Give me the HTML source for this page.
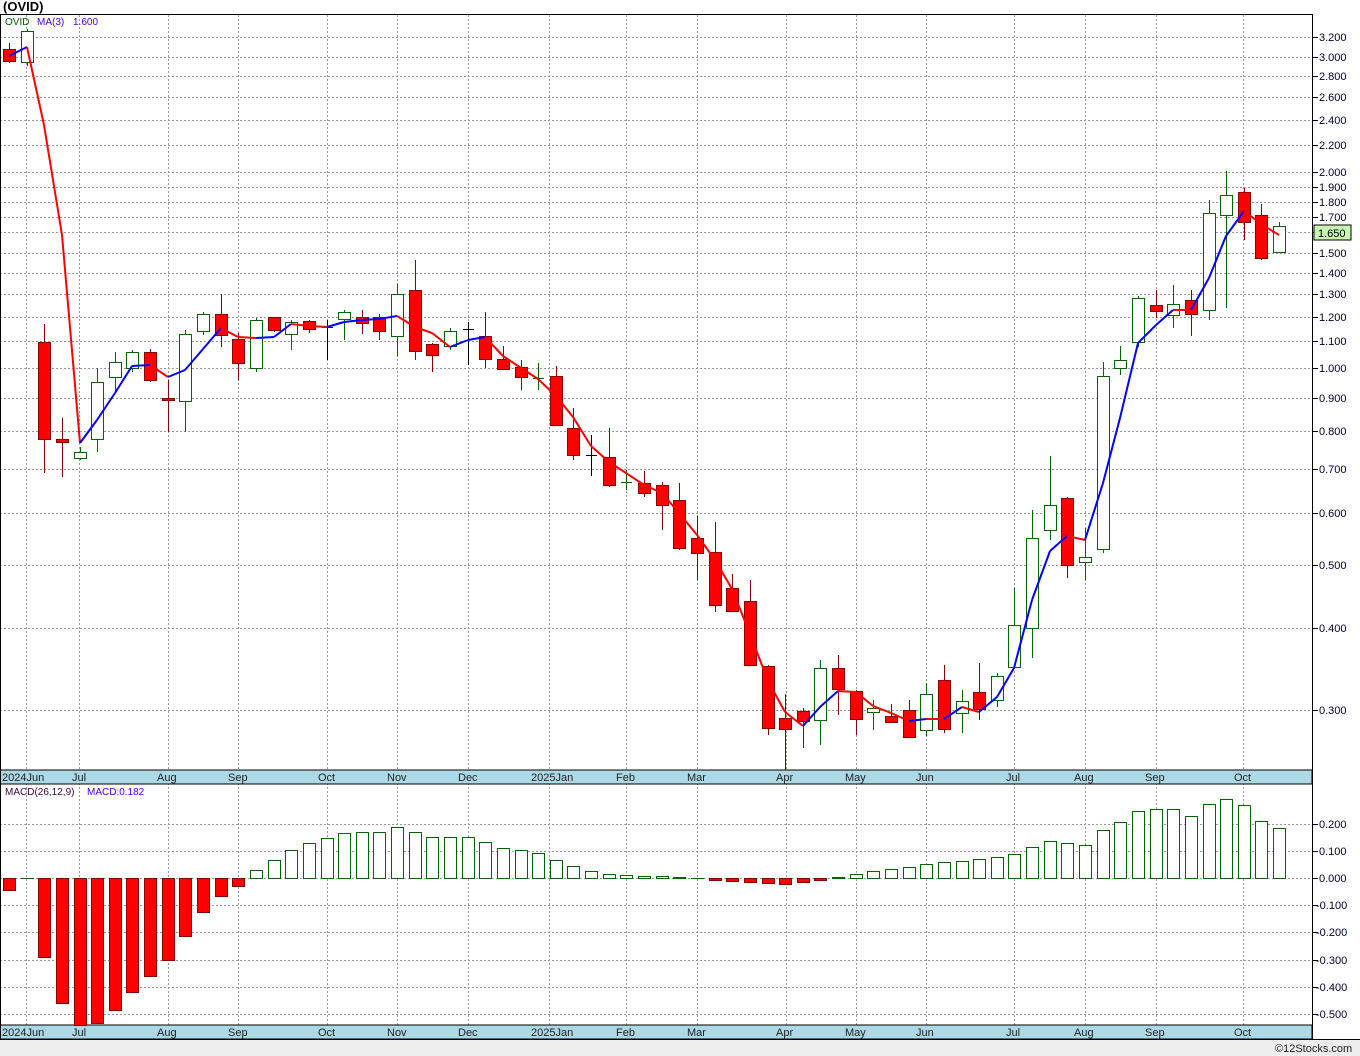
<!DOCTYPE html>
<html><head><meta charset="utf-8"><style>
html,body{margin:0;padding:0;background:#fff;width:1360px;height:1056px;overflow:hidden;font-family:"Liberation Sans",sans-serif}
svg{position:absolute;left:0;top:0}
text{font-family:"Liberation Sans",sans-serif;font-size:11px}
</style></head><body>
<svg id="s" width="1360" height="1056" xmlns="http://www.w3.org/2000/svg">
<rect x="0" y="1039" width="1360" height="17" fill="#eeeeee"/>
<g id="grid"></g>
<rect x="0" y="770" width="1312" height="14" fill="#add8e6" stroke="#000" stroke-width="1"/>
<rect x="0" y="1025" width="1312" height="14" fill="#add8e6" stroke="#000" stroke-width="1"/>
<g id="data"></g>
<line x1="0" y1="14.5" x2="1312" y2="14.5" stroke="#000"/>
<line x1="0.5" y1="14" x2="0.5" y2="1039" stroke="#000"/>
<line x1="1312.5" y1="14" x2="1312.5" y2="1039" stroke="#000"/>
<line x1="0" y1="1039.5" x2="1360" y2="1039.5" stroke="#000"/>
<text x="3" y="11" font-weight="bold" style="font-size:13px">(OVID)</text>
<text x="5" y="25" fill="#006400" style="font-size:10px">OVID</text>
<text x="37" y="25" fill="#4b00ff" style="font-size:10px">MA(3)</text>
<text x="73" y="25" fill="#4b00ff" style="font-size:10px">1.600</text>
<text x="5" y="795" fill="#400040" style="font-size:10px">MACD(26,12,9)</text>
<text x="87" y="795" fill="#4b00ff" style="font-size:10px">MACD:0.182</text>
<g fill="#222" style="font-size:11px">
<text x="2" y="781">2024Jun</text><text x="72" y="781">Jul</text><text x="157" y="781">Aug</text><text x="228" y="781">Sep</text><text x="318" y="781">Oct</text><text x="387" y="781">Nov</text><text x="458" y="781">Dec</text><text x="531" y="781">2025Jan</text><text x="616" y="781">Feb</text><text x="687" y="781">Mar</text><text x="776" y="781">Apr</text><text x="845" y="781">May</text><text x="916" y="781">Jun</text><text x="1006" y="781">Jul</text><text x="1074" y="781">Aug</text><text x="1145" y="781">Sep</text><text x="1234" y="781">Oct</text>
<text x="2" y="1036">2024Jun</text><text x="72" y="1036">Jul</text><text x="157" y="1036">Aug</text><text x="228" y="1036">Sep</text><text x="318" y="1036">Oct</text><text x="387" y="1036">Nov</text><text x="458" y="1036">Dec</text><text x="531" y="1036">2025Jan</text><text x="616" y="1036">Feb</text><text x="687" y="1036">Mar</text><text x="776" y="1036">Apr</text><text x="845" y="1036">May</text><text x="916" y="1036">Jun</text><text x="1006" y="1036">Jul</text><text x="1074" y="1036">Aug</text><text x="1145" y="1036">Sep</text><text x="1234" y="1036">Oct</text>
</g>
<g id="axis" fill="#000033" style="font-size:11px">
<text x="1319" y="41">3.200</text><text x="1319" y="61">3.000</text><text x="1319" y="80">2.800</text><text x="1319" y="101">2.600</text><text x="1319" y="124">2.400</text><text x="1319" y="149">2.200</text><text x="1319" y="176">2.000</text><text x="1319" y="191">1.900</text><text x="1319" y="206">1.800</text><text x="1319" y="221">1.700</text><text x="1319" y="257">1.500</text><text x="1319" y="277">1.400</text><text x="1319" y="298">1.300</text><text x="1319" y="321">1.200</text><text x="1319" y="345">1.100</text><text x="1319" y="372">1.000</text><text x="1319" y="402">0.900</text><text x="1319" y="435">0.800</text><text x="1319" y="473">0.700</text><text x="1319" y="517">0.600</text><text x="1319" y="569">0.500</text><text x="1319" y="632">0.400</text><text x="1319" y="714">0.300</text>
<text x="1319" y="828">0.200</text><text x="1319" y="855">0.100</text><text x="1319" y="882">0.000</text><text x="1316" y="909">-0.100</text><text x="1316" y="936">-0.200</text><text x="1316" y="964">-0.300</text><text x="1316" y="991">-0.400</text><text x="1316" y="1018">-0.500</text>
</g>
<rect x="1314" y="225" width="37" height="15" fill="#c8f7b0" stroke="#000"/>
<text x="1318" y="237" fill="#000" style="font-size:11px">1.650</text>
<text x="1275" y="1052" fill="#222" style="font-size:11px">©12Stocks.com</text>
</svg>
<script>
var NS="http://www.w3.org/2000/svg";
function el(p,t,a){var e=document.createElementNS(NS,t);for(var k in a)e.setAttribute(k,a[k]);p.appendChild(e);return e;}
var g=document.getElementById("grid"),d=document.getElementById("data");
var hy=[37,57,76,97,120,145,172,187,202,217,232,253,273,294,317,341,368,398,431,469,513,565,628,710];
hy.forEach(function(y){el(g,"line",{x1:0,x2:1312,y1:y+.5,y2:y+.5,stroke:"#999","stroke-dasharray":"2,2"});el(g,"line",{x1:1312,x2:1318,y1:y+.5,y2:y+.5,stroke:"#000"});});
[824,851,878,905,932,960,987,1014].forEach(function(y){el(g,"line",{x1:0,x2:1312,y1:y+.5,y2:y+.5,stroke:"#999","stroke-dasharray":"2,2"});el(g,"line",{x1:1312,x2:1318,y1:y+.5,y2:y+.5,stroke:"#000"});});
[26,79,168,238,327,397,468,549,626,697,786,856,926,1014,1085,1156,1243].forEach(function(x){el(g,"line",{x1:x+.5,x2:x+.5,y1:15,y2:1025,stroke:"#999","stroke-dasharray":"2,2"});});
var C=[[0,43,63,49,61],[1,29,66,31,62],[0,324,473,342,439],[0,418,477,439,442],[1,447,460,452,458],[1,368,452,382,439],[1,352,392,362,377],[1,350,372,352,368],[0,349,382,352,380],[0,380,432,398,400],[1,330,432,334,401],[1,312,335,314,331],[0,294,347,314,335],[0,333,380,339,363],[1,318,372,320,368],[0,317,332,317,330],[1,320,350,322,334],[0,320,333,321,329],[2,320,360,327,328],[1,310,340,312,319],[0,310,334,317,323],[0,314,340,317,331],[1,284,356,294,336],[0,260,360,290,351],[0,343,372,344,355],[1,328,350,331,346],[2,322,365,329,331],[0,312,368,336,359],[0,346,370,359,369],[0,360,390,367,377],[3,363,390,378,380],[0,366,425,376,425],[0,408,460,428,455],[2,435,476,455,457],[0,428,487,457,485],[3,470,490,482,484],[0,471,497,483,493],[0,482,530,485,505],[0,483,550,500,548],[0,516,580,538,553],[0,522,612,552,605],[0,574,612,588,611],[0,580,665,601,665],[0,665,735,666,728],[0,694,770,718,729],[0,708,748,711,721],[1,660,745,668,720],[0,655,715,668,689],[0,690,735,691,719],[1,700,730,708,712],[0,704,722,716,722],[0,700,738,710,737],[1,683,736,694,730],[0,665,733,680,729],[1,690,733,701,713],[0,663,720,692,709],[1,673,707,676,700],[1,588,667,625,667],[1,510,658,538,628],[1,456,540,505,530],[0,497,578,498,565],[1,528,580,557,562],[1,362,553,376,549],[1,346,375,360,368],[1,296,347,298,342],[0,290,318,305,311],[1,285,328,304,315],[0,290,336,300,314],[1,200,320,213,310],[1,171,308,195,215],[0,188,240,192,222],[0,204,260,215,258],[1,222,253,226,252]];
function X(i){return Math.round(9+i*17.64);}
C.forEach(function(c,i){var x=X(i),t=c[0];
 var col=(t==0)?"#8b0000":(t==2?"#000":"#006400");
 el(d,"line",{x1:x+.5,x2:x+.5,y1:c[1],y2:c[2],stroke:col});
 var h=Math.max(c[4]-c[3],1);
 if(t==0)el(d,"rect",{x:x-5.5,y:c[3]+.5,width:12,height:h,fill:"#ff0000",stroke:"#8b0000"});
 else if(t==1)el(d,"rect",{x:x-5.5,y:c[3]+.5,width:12,height:h,fill:"#fff",stroke:"#006400"});
 else el(d,"line",{x1:x-5,x2:x+6,y1:c[3]+.5,y2:c[3]+.5,stroke:col});
});
var M=[56,47,125,235,443,420,393,366,365,377,370,349,328,337,338,337,324,326,327,322,320,319,316,327,333,347,340,337,356,368,379,396,417,446,462,473,485,493,513,535,560,589,634,681,712,726,707,691,692,706,713,721,719,719,707,712,697,668,600,551,536,540,483,418,343,325,310,310,278,236,211,224,235];
for(var i=0;i<M.length-1;i++){el(d,"line",{x1:X(i),y1:M[i],x2:X(i+1),y2:M[i+1],stroke:M[i+1]<M[i]?"#0000ff":"#ff0000","stroke-width":2});}
var B=[890,878,957,1003,1025,1023,1010,992,976,960,936,912,896,886,870,860,850,843,838,833,832,832,827,832,837,837,837,842,848,850,853,860,866,871,874,875,876,876,877,878,880,881,882,883,884,882,880,877,874,871,869,867,864,862,861,859,857,854,847,841,843,845,830,822,811,809,809,816,804,799,805,821,828];
B.forEach(function(b,i){var x=X(i);
 if(b>878)el(d,"rect",{x:x-5.5,y:878.5,width:12,height:b-878,fill:"#ff0000",stroke:"#8b0000"});
 else if(b<878)el(d,"rect",{x:x-5.5,y:b+.5,width:12,height:878-b,fill:"#fff",stroke:"#006400"});
 else el(d,"line",{x1:x-6,x2:x+7,y1:878.5,y2:878.5,stroke:"#006400"});
});
</script>
</body></html>
